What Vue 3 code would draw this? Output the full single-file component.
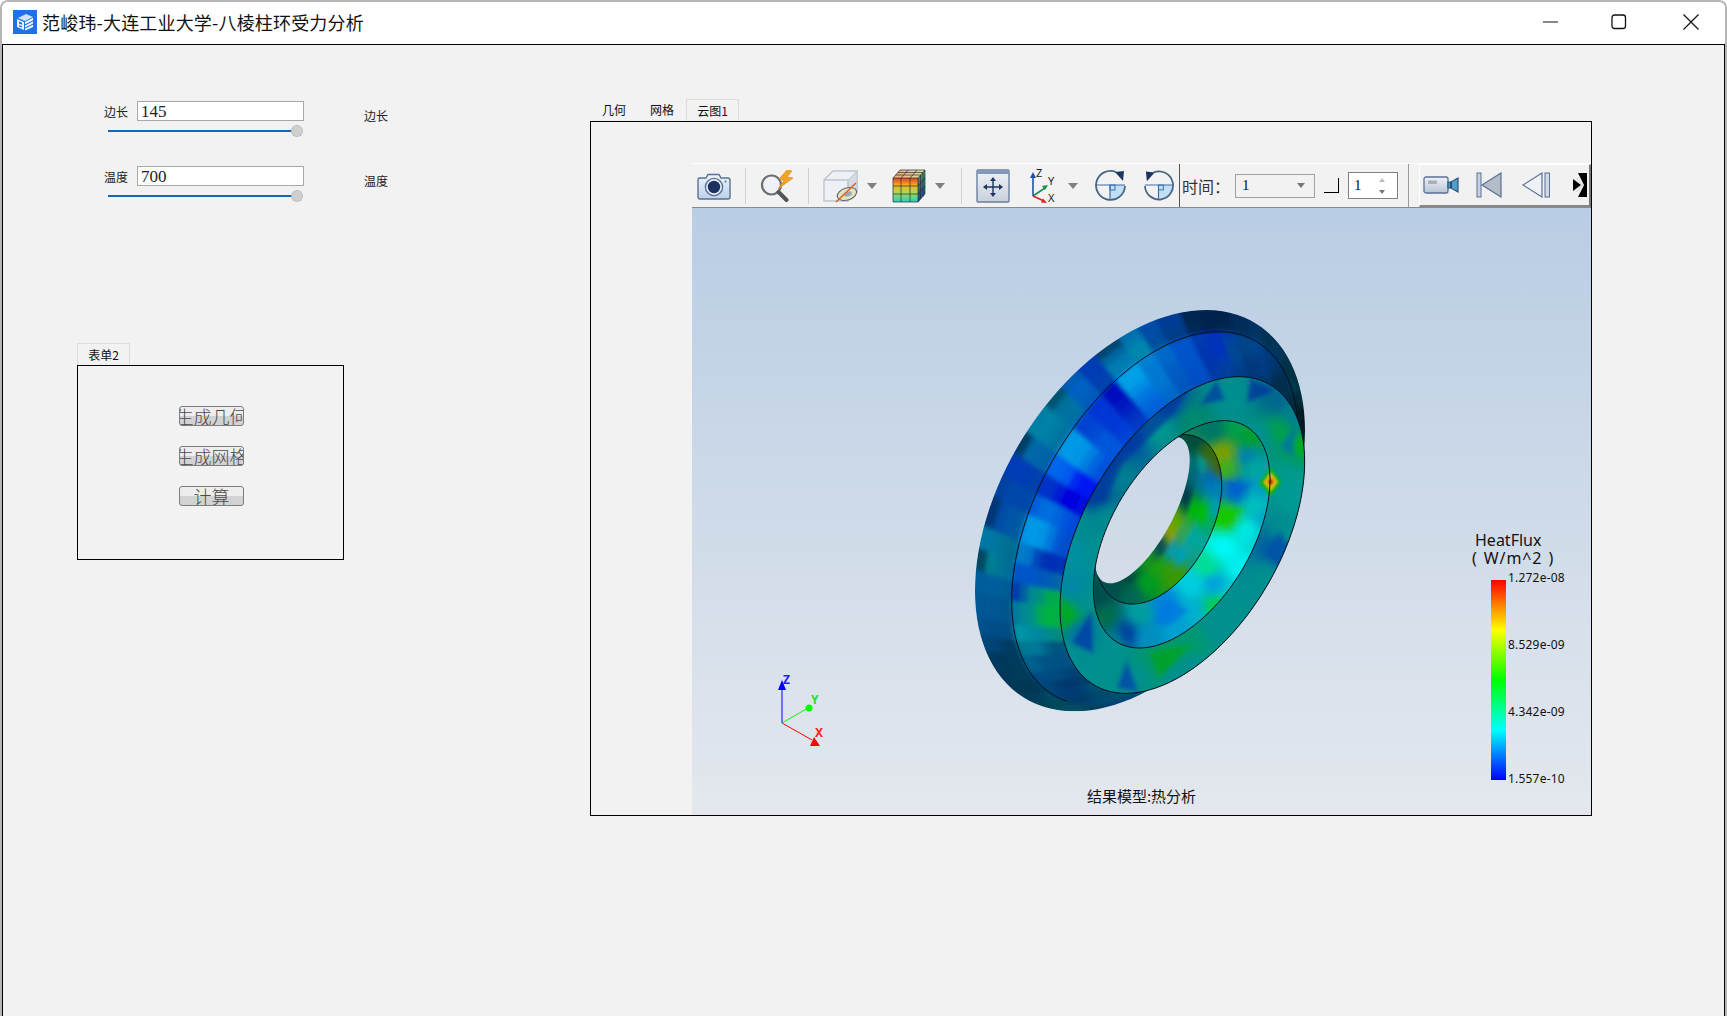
<template>
  <div class="window">
    <!-- 标题栏 -->
    <div class="titlebar">
      <svg class="app-icon" width="24" height="24" viewBox="0 0 24 24">
        <rect width="24" height="24" fill="#1a73e8" />
        <path d="M5 8l8-4 7 3-8 4z" fill="#cfe2fb" />
        <path d="M4 9l7 3v8l-7-3z" fill="#e8f1fd" />
        <path d="M12 12l8-4v2.2l-8 4zM12 15.4l8-4v2.2l-8 4zM12 18.8l8-4V17l-8 3.6z" fill="#fff" />
        <path d="M6 11.5l3 1.2v2l-3-1.2zM6 15l3 1.2v1.4l-3-1.2z" fill="#1a73e8" />
      </svg>
      <span class="title">范峻玮-大连工业大学-八棱柱环受力分析</span>
      <div class="win-btns">
        <svg width="16" height="16" viewBox="0 0 16 16"><path d="M0 8h15" stroke="#111" stroke-width="1.2" /></svg>
        <svg class="win-max" width="16" height="16" viewBox="0 0 16 16"><rect x="1" y="1" width="13.5" height="13.5" rx="2.5" fill="none" stroke="#111" stroke-width="1.3" /></svg>
        <svg class="win-close" width="16" height="16" viewBox="0 0 16 16"><path d="M.5.5l15 15M15.5.5l-15 15" stroke="#111" stroke-width="1.2" /></svg>
      </div>
    </div>

    <div class="client">
      <!-- 左侧参数 -->
      <div class="left">
        <div class="field" v-for="f in fields" :key="f.label">
          <div class="field-main">
            <div class="field-row">
              <span class="field-label">{{ f.label }}</span>
              <input class="field-input" type="text" :value="f.value" />
            </div>
            <div class="slider"><i class="slider-thumb"></i></div>
          </div>
          <span class="field-echo">{{ f.label }}</span>
        </div>

        <div class="form-tabs">
          <div class="tab active">表单2</div>
        </div>
        <div class="form-panel">
          <button class="btn" v-for="b in buttons" :key="b">{{ b }}</button>
        </div>
      </div>

      <!-- 右侧视图 -->
      <div class="right">
        <div class="view-tabs">
          <div class="tab plain">几何</div>
          <div class="tab plain">网格</div>
          <div class="tab active">云图1</div>
        </div>
        <div class="view-panel">
          <div class="toolbar">
            <svg class="i-camera" width="34" height="30" viewBox="0 0 34 30">
              <defs>
                <linearGradient id="camBody" x1="0" y1="0" x2="0" y2="1"><stop offset="0" stop-color="#eef4fb" /><stop offset="1" stop-color="#bcd2ea" /></linearGradient>
              </defs>
              <path d="M2 7h7l2-3.5h11L24 7h7a2 2 0 012 2v17a2 2 0 01-2 2H3a2 2 0 01-2-2V9a2 2 0 012-2z" fill="url(#camBody)" stroke="#5a7096" stroke-width="1.4" />
              <circle cx="17" cy="16" r="8.6" fill="#e8eef6" stroke="#5a7096" stroke-width="1.4" />
              <circle cx="17" cy="16" r="6.2" fill="#1c3160" />
              <circle cx="28.5" cy="10.5" r="1" fill="#5a7096" />
            </svg>
            <i class="sep s-1"></i>
            <svg class="i-mag" width="36" height="32" viewBox="0 0 36 32">
              <circle cx="11.500" cy="15" r="9.500" fill="#eef2f6" stroke="#6b6f73" stroke-width="2.200" />
              <path d="M18.500 22l8 8" stroke="#555" stroke-width="4" stroke-linecap="round" />
              <path d="M27 0l-8 9 5 1.500-6 8.500 15-11-6-1 5-6z" fill="#f0a326" stroke="#d98412" stroke-width=".6" />
            </svg>
            <i class="sep s-2"></i>
            <svg class="i-cube" width="38" height="34" viewBox="0 0 38 34">
              <path d="M1 11L10 2h24v21l-9 9H1z" fill="#eef0f4" stroke="#bcc5d2" stroke-width="1.4" />
              <path d="M25 11L34 2v21l-9 9z" fill="#d5dae2" stroke="#bcc5d2" />
              <path d="M1 11h24v21" fill="none" stroke="#bcc5d2" stroke-width="1.4" />
              <ellipse cx="24" cy="25" rx="10" ry="6" fill="#e8e2b8" stroke="#5b6a80" stroke-width="1.2" transform="rotate(-18 24 25)" />
              <ellipse cx="25" cy="25" rx="4" ry="2.4" fill="#9aa7ba" transform="rotate(-18 25 25)" />
              <path d="M13 33L33 14" stroke="#d9612a" stroke-width="1.5" />
            </svg>
            <svg class="arrow a-1" width="10" height="6" viewBox="0 0 10 6"><path d="M0 0h10L5 6z" /></svg>
            <svg class="i-rubik" width="34" height="34" viewBox="0 0 34 34">
              <defs>
                <linearGradient id="rubFront" x1="0" y1="0" x2="0" y2="1">
                  <stop offset="0" stop-color="#e0402a" /><stop offset=".3" stop-color="#f4b020" /><stop offset=".6" stop-color="#a8dc50" /><stop offset="1" stop-color="#28ccc0" />
                </linearGradient>
                <linearGradient id="rubTop" x1="0" y1="0" x2="1" y2="0"><stop offset="0" stop-color="#f4a878" /><stop offset="1" stop-color="#dce89c" /></linearGradient>
                <linearGradient id="rubSide" x1="0" y1="0" x2="0" y2="1"><stop offset="0" stop-color="#40a860" /><stop offset="1" stop-color="#1840b0" /></linearGradient>
              </defs>
              <path d="M1 9l7-8h25l-7 8z" fill="url(#rubTop)" />
              <rect x="1" y="9" width="25" height="24" fill="url(#rubFront)" />
              <path d="M26 9l7-8v24l-7 8z" fill="url(#rubSide)" />
              <path d="M1 9l7-8h25v24l-7 8H1zM1 9h25l7-8M26 9v24M9 9v24M18 9v24M1 17h25M1 25h25M9 9l7-8M18 9l7-8M3.500 6h25M6 3.500h25M28.500 6v24M31 3.500v24M26 17l7-8M26 25l7-8" stroke="#2b2b2b" stroke-width=".7" fill="none" />
            </svg>
            <svg class="arrow a-2" width="10" height="6" viewBox="0 0 10 6"><path d="M0 0h10L5 6z" /></svg>
            <i class="sep s-3"></i>
            <svg class="i-fit" width="34" height="34" viewBox="0 0 34 34">
              <defs>
                <linearGradient id="fitBg" x1="0" y1="0" x2="0" y2="1"><stop offset="0" stop-color="#f0f2f5" /><stop offset="1" stop-color="#c9d0dc" /></linearGradient>
              </defs>
              <rect x="1" y="1" width="32" height="32" rx="1" fill="url(#fitBg)" stroke="#6b7f9f" stroke-width="1.4" />
              <rect x="1" y="1" width="32" height="4" fill="#8498b8" />
              <path d="M17 10v16M9 18h16" stroke="#1d3560" stroke-width="1.4" />
              <path d="M17 8l-3 4h6zM17 28l-3-4h6zM7 18l4-3v6zM27 18l-4-3v6z" fill="#1d3560" />
            </svg>
            <svg class="i-axes" width="30" height="34" viewBox="0 0 30 34">
              <path d="M5 27V8" stroke="#2050b0" stroke-width="1.6" />
              <path d="M5 3l-3 6h6z" fill="#2050b0" />
              <path d="M5 27l12-8" stroke="#189048" stroke-width="1.6" />
              <path d="M20 16l-6 1 3 4z" fill="#189048" />
              <path d="M5 27l11 5" stroke="#e02020" stroke-width="1.6" />
              <path d="M19 34l-6-.500 2-4z" fill="#e02020" />
              <text x="8" y="8" class="axis-txt">Z</text>
              <text x="20" y="16" class="axis-txt">Y</text>
              <text x="20" y="33" class="axis-txt">X</text>
            </svg>
            <svg class="arrow a-3" width="10" height="6" viewBox="0 0 10 6"><path d="M0 0h10L5 6z" /></svg>
            <svg class="i-rot" width="33" height="33" viewBox="0 0 33 33">
              <path d="M16 16h15a15 15 0 01-15 15z" fill="#bfe0f6" />
              <rect x="16" y="16" width="5" height="5" fill="none" stroke="#3f6ea8" />
              <path d="M16 16v15M1.500 16h29.500" stroke="#3f6ea8" stroke-width="1.200" fill="none" />
              <path d="M31 17A14.500 14.500 0 1122 3" fill="none" stroke="#4a6486" stroke-width="1.800" />
              <path d="M21 3l9-1-1 10z" fill="#1d3560" />
            </svg>
            <svg class="i-rot i-rot2" width="32" height="33" viewBox="0 0 33 33">
              <path d="M16 16h15a15 15 0 01-15 15z" fill="#bfe0f6" />
              <rect x="16" y="16" width="5" height="5" fill="none" stroke="#3f6ea8" />
              <path d="M16 16v15M2 16h29" stroke="#3f6ea8" stroke-width="1.200" fill="none" />
              <path d="M2 17A14.500 14.500 0 1011 3" fill="none" stroke="#4a6486" stroke-width="1.800" />
              <path d="M12 3L3 2l1 10z" fill="#1d3560" />
            </svg>
            <i class="sep dark"></i>
            <span class="time-label">时间：</span>
            <div class="time-select"><span>1</span><svg width="8" height="5" viewBox="0 0 8 5"><path d="M0 0h8L4 5z" fill="#777" /></svg></div>
            <i class="mini-btn"></i>
            <div class="time-spin">
              <span>1</span>
              <svg width="8" height="16" viewBox="0 0 8 16"><path d="M4 0l3 4H1z" fill="#bbb" /><path d="M4 16l3-4H1z" fill="#777" /></svg>
            </div>
            <i class="sep s-4"></i>
            <div class="player">
              <svg class="i-video" width="36" height="20" viewBox="0 0 36 20">
                <defs>
                  <linearGradient id="vidBody" x1="0" y1="0" x2="0" y2="1"><stop offset="0" stop-color="#f0f3f7" /><stop offset="1" stop-color="#b8c4d4" /></linearGradient>
                </defs>
                <rect x="1" y="2" width="24" height="16" rx="2" fill="url(#vidBody)" stroke="#5a7096" stroke-width="1.300" />
                <rect x="5" y="5.500" width="9" height="3.500" fill="#a8b0bc" />
                <path d="M25 7h3l7-4v14l-7-4h-3z" fill="#4f9fd0" stroke="#34507a" stroke-width="1.200" />
                <path d="M28 7v6" stroke="#1d3560" stroke-width="1.500" />
              </svg>
              <svg class="i-first" width="26" height="26" viewBox="0 0 26 26">
                <rect x="1" y="1" width="4" height="24" fill="#c8d2e0" stroke="#5a7096" />
                <path d="M6 13L25 1v24z" fill="#b4bcc8" stroke="#5a7096" stroke-width="1.200" />
              </svg>
              <svg class="i-prev" width="29" height="26" viewBox="0 0 29 26">
                <path d="M1 13L20 1v24z" fill="#eef1f5" stroke="#5a7096" stroke-width="1.200" />
                <rect x="23" y="1" width="4.500" height="24" fill="#d0d8e4" stroke="#5a7096" />
              </svg>
              <svg class="i-next" width="14" height="24" viewBox="0 0 14 24">
                <defs><filter id="softNext" x="-20%" y="-20%" width="140%" height="140%"><feGaussianBlur stdDeviation=".6" /></filter></defs>
                <g filter="url(#softNext)">
                  <path d="M0 6l8 6-8 6z" fill="#000" />
                  <path d="M5 0h9v24H5l6-12z" fill="#000" />
                  <path d="M3.500 5l6 7-6 7" fill="none" stroke="#ddd" stroke-width="1.500" />
                </g>
              </svg>
            </div>
          </div>

          <div class="viewport">
            <!-- 八棱柱环云图 -->
            <svg class="ring" width="380" height="440" viewBox="0 0 1140 1320">
              <defs>
                <clipPath id="hullClip"><path :d="outline(S)" /><path :d="outline(A)" /><path :d="outline(B)" /></clipPath>
                <clipPath id="faceClip"><path :d="outline(B)" /></clipPath>
                <clipPath id="boreClip"><path :d="outline(C)" /></clipPath>
                <clipPath id="wallClip"><path :d="outline(D)" /></clipPath>
                <filter id="soften" filterUnits="userSpaceOnUse" x="0" y="0" width="1140" height="1320">
                  <feGaussianBlur in="SourceGraphic" stdDeviation="6" result="soft" />
                  <feMerge><feMergeNode in="SourceGraphic" /><feMergeNode in="soft" /></feMerge>
                </filter>
                <filter id="softSpot" filterUnits="userSpaceOnUse" x="840" y="480" width="190" height="190">
                  <feGaussianBlur stdDeviation="3" />
                </filter>
                <linearGradient id="holeBg" gradientUnits="userSpaceOnUse" x1="0" y1="420" x2="0" y2="900">
                  <stop offset="0" stop-color="#cad7e7" /><stop offset="1" stop-color="#d4dde9" />
                </linearGradient>
              </defs>
              <g clip-path="url(#hullClip)">
                <g filter="url(#soften)"><path v-for="(cell, i) in cells.rim" :key="'r' + i" :d="cell.d" :fill="cell.c" :stroke="cell.c" stroke-width="1.500" /></g>
              </g>
              <path :d="arc(A, 232, 5)" class="edge" />
              <g clip-path="url(#faceClip)">
                <g filter="url(#soften)">
                  <path v-for="(cell, i) in cells.face" :key="'f' + i" :d="cell.d" :fill="cell.c" :stroke="cell.c" stroke-width="1.500" />
                  <polygon v-for="(f, i) in faceFacets" :key="'ff' + i" :points="f[0]" :fill="f[1]" fill-opacity="0.72" />
                </g>
              </g>
              <path :d="outline(B)" class="edge" />
              <g clip-path="url(#boreClip)">
                <g filter="url(#soften)">
                  <path v-for="(cell, i) in cells.bore" :key="'b' + i" :d="cell.d" :fill="cell.c" :stroke="cell.c" stroke-width="1.500" />
                  <polygon v-for="(f, i) in boreFacets" :key="'bf' + i" :points="f[0]" :fill="f[1]" fill-opacity="0.72" />
                </g>
                <g clip-path="url(#wallClip)">
                  <g filter="url(#soften)"><path v-for="(cell, i) in cells.wall" :key="'w' + i" :d="cell.d" :fill="cell.c" :stroke="cell.c" stroke-width="1.500" /></g>
                </g>
                <path :d="outline(D)" class="edge" />
                <path :d="outline(E)" fill="url(#holeBg)" />
              </g>
              <!-- 最高温点 -->
              <g filter="url(#softSpot)">
                <polygon points="932,530 965,575 932,620 895,578" fill="#10b020" />
                <polygon points="932,548 952,575 932,602 912,577" fill="#e8c000" />
                <polygon points="932,562 942,575 932,588 922,576" fill="#d01818" />
              </g>
              <path :d="outline(C)" class="edge" />
            </svg>

            <svg class="triad" width="120" height="100" viewBox="0 0 120 100">
              <path d="M42 63V26" stroke="#0000ff" />
              <path d="M42 20l-4 10h8z" fill="#0000ff" />
              <path d="M42 63l26-15" stroke="#00ff00" />
              <circle cx="69" cy="48" r="3.500" fill="#00ff00" />
              <path d="M42 63l30 17" stroke="#ff0000" />
              <path d="M74 77l6 9H70z" fill="#ff0000" />
              <text x="43" y="24" fill="#2222ff" class="triad-txt">Z</text>
              <text x="71" y="44" fill="#22e022" class="triad-txt">Y</text>
              <text x="75" y="77" fill="#ff2222" class="triad-txt">X</text>
            </svg>

            <div class="legend">
              <div class="legend-title">HeatFlux</div>
              <div class="legend-unit">( W/m^2 )</div>
              <div class="legend-body">
                <div class="legend-bar"></div>
                <div class="legend-ticks">
                  <span v-for="t in ticks" :key="t">{{ t }}</span>
                </div>
              </div>
            </div>

            <div class="model-name">结果模型:热分析</div>
          </div>
        </div>
      </div>
    </div>
  </div>
</template>

<script setup>
const fields = [
  { label: '边长', value: '145' },
  { label: '温度', value: '700' }
]
const buttons = ['生成几何', '生成网格', '计算']
const ticks = ['1.272e-08', '8.529e-09', '4.342e-09', '1.557e-10']

// 各圈椭圆，坐标是参考图放大3倍后量的
const S = { cx: 540, cy: 662, rx: 495, ry: 602, phi: 0.41 }
const A = { cx: 585, cy: 685, rx: 430, ry: 560, phi: 0.46 }
const B = { cx: 667, cy: 735, rx: 367, ry: 475, phi: 0.48 }
const C = { cx: 665, cy: 733, rx: 265, ry: 341, phi: 0.5 }
const D = { cx: 595, cy: 688, rx: 190, ry: 254, phi: 0.42 }
const E = { cx: 547, cy: 660, rx: 142, ry: 220, phi: 0.75 }

const at = (e, t) => [e.cx + e.rx * Math.cos(t), e.cy - e.ry * Math.sin(t + e.phi)]
const outline = (e) => {
  let d = ''
  for (let i = 0; i < 120; i++) {
    const p = at(e, (i / 120) * Math.PI * 2)
    d += (i ? 'L' : 'M') + p[0].toFixed(1) + ' ' + p[1].toFixed(1)
  }
  return d + 'Z'
}
// 只画一段椭圆，角度用度
const arc = (e, from, to) => {
  let d = ''
  for (let i = 0; i <= 80; i++) {
    const p = at(e, ((from + ((to - from) * i) / 80) * Math.PI) / 180)
    d += (i ? 'L' : 'M') + p[0].toFixed(1) + ' ' + p[1].toFixed(1)
  }
  return d
}

const rgb = (h) => [parseInt(h.slice(1, 3), 16), parseInt(h.slice(3, 5), 16), parseInt(h.slice(5, 7), 16)]

// 控制点取色，中间用反距离插值
const colorAt = (pts, x, y, shade = 1) => {
  let r = 0, g = 0, b = 0, sum = 0
  for (const p of pts) {
    const d2 = (p[0] - x) ** 2 + (p[1] - y) ** 2
    const w = 1 / (d2 + 400) ** 1.9
    const c = rgb(p[2])
    r += c[0] * w; g += c[1] * w; b += c[2] * w; sum += w
  }
  const fix = (v) => Math.min(255, Math.round((v / sum) * shade))
  return `rgb(${fix(r)},${fix(g)},${fix(b)})`
}

const lerp = (p, q, s) => [p[0] + (q[0] - p[0]) * s, p[1] + (q[1] - p[1]) * s]

// facets>0 时颜色按粗分段取样，外圈就有径向的条纹
const band = (from, to, steps, pts, facets = 0) => {
  const out = []
  const n = 170
  for (let i = 0; i < n; i++) {
    const t0 = (i / n) * Math.PI * 2
    const t1 = ((i + 1) / n) * Math.PI * 2
    for (let j = 0; j < steps; j++) {
      const s0 = j / steps
      const s1 = (j + 1) / steps
      const a = lerp(at(from, t0), at(to, t0), s0)
      const b = lerp(at(from, t1), at(to, t1), s0)
      const c = lerp(at(from, t1), at(to, t1), s1)
      const d = lerp(at(from, t0), at(to, t0), s1)
      let m = [(a[0] + b[0] + c[0] + d[0]) / 4, (a[1] + b[1] + c[1] + d[1]) / 4]
      let shade = 1
      if (facets) {
        const k = Math.floor((i / n) * facets)
        const tc = ((k + 0.5) / facets) * Math.PI * 2
        m = lerp(at(from, tc), at(to, tc), (s0 + s1) / 2)
        shade = 1 + 0.05 * Math.sin(k * 2.4)
      }
      out.push({
        d: `M${a[0].toFixed(1)} ${a[1].toFixed(1)}L${b[0].toFixed(1)} ${b[1].toFixed(1)}L${c[0].toFixed(1)} ${c[1].toFixed(1)}L${d[0].toFixed(1)} ${d[1].toFixed(1)}Z`,
        c: colorAt(pts, m[0], m[1], shade)
      })
    }
  }
  return out
}

const rearPts = [
  [700, 75, '#002a55'], [780, 85, '#00214a'], [620, 85, '#003a90'], [560, 110, '#0050b0'], [500, 140, '#0070b0'],
  [430, 155, '#00304a'], [300, 280, '#002a3a'], [180, 450, '#002540'], [90, 640, '#00203a'], [55, 800, '#002a40'],
  [520, 180, '#0090b0'], [420, 220, '#0040c0'], [350, 290, '#0060c0'], [280, 370, '#0090b0'], [230, 440, '#0070b0'],
  [170, 540, '#0040c0'], [120, 640, '#0050c0'], [90, 720, '#0080b0'], [85, 790, '#0090a0'], [80, 870, '#0060a0'],
  [70, 950, '#005a98'], [90, 1030, '#004a80'], [130, 1120, '#00385a'], [190, 1190, '#003a58'], [850, 110, '#003060'],
  [930, 170, '#003550'], [990, 260, '#003040'], [1030, 380, '#001a20'], [980, 300, '#004a60'], [910, 200, '#00408a'],
  [330, 1240, '#005060'], [420, 1250, '#004060'], [500, 1240, '#003a90'], [600, 1190, '#003060']
]
const midPts = [
  [770, 170, '#0030b8'], [680, 190, '#0050c0'], [600, 210, '#0070d0'], [540, 240, '#00a0e0'], [470, 310, '#0010c8'],
  [400, 380, '#0040d0'], [340, 470, '#00a0f0'], [300, 540, '#0060e0'], [340, 600, '#0000e8'], [260, 600, '#0030d0'],
  [240, 690, '#0080e0'], [220, 740, '#00a0e0'], [270, 800, '#0030c0'], [190, 850, '#0050c0'], [170, 920, '#0030b0'],
  [200, 935, '#00a090'], [270, 960, '#00b840'], [170, 1000, '#0090a0'], [230, 1060, '#0080a0'], [270, 1100, '#005080'],
  [240, 1170, '#004a80'], [330, 1190, '#003a70'], [850, 180, '#004a90'], [900, 230, '#003a80'], [960, 300, '#003050'],
  [1010, 400, '#002a30'], [420, 1170, '#005070']
]
const facePts = [
  [620, 340, '#0050a0'], [500, 430, '#0040a8'], [430, 530, '#0030a0'], [400, 620, '#004a98'], [360, 700, '#008c90'],
  [345, 800, '#0090a0'], [340, 900, '#0088a8'], [315, 970, '#00b010'], [370, 930, '#009090'], [360, 1030, '#0078a0'],
  [340, 1090, '#008f90'], [430, 1120, '#009090'], [480, 1050, '#009090'], [580, 1130, '#009a60'],
  [620, 1090, '#009a60'], [640, 1155, '#009090'], [700, 1070, '#009a70'], [780, 1020, '#00908e'], [850, 950, '#009090'],
  [920, 860, '#009090'], [940, 780, '#0060a0'], [980, 720, '#008f90'], [1010, 620, '#009a96'], [1022, 480, '#009a60'],
  [960, 420, '#00a050'], [900, 440, '#009090'], [810, 320, '#008f90'], [950, 330, '#006890'], [1000, 380, '#008090'],
  [700, 400, '#008a70'], [590, 410, '#009a90'], [480, 560, '#008090'], [440, 690, '#008a90'], [420, 780, '#009090'],
  [985, 570, '#009a90'], [550, 1150, '#009090'], [700, 1120, '#009090'], [830, 1010, '#009090']
]
const faceFacets = [
  ['570,1090 700,1060 600,1165', '#00a418'],
  ['335,1060 395,960 400,1090', '#0036a8'],
  ['470,1195 500,1110 535,1205', '#0040b0'],
  ['1036,420 1036,510 985,470', '#00b010'],
  ['1005,410 960,470 1000,500', '#0070a8'],
  ['720,345 770,270 795,330', '#003aa0'],
  ['860,340 870,265 945,300', '#0030a0'],
  ['915,790 960,720 985,770 950,830', '#0050a8'],
  ['385,640 440,510 610,345 690,295 640,375 490,520 435,640', '#0038a0'],
  ['170,950 320,930 320,1000 190,990', '#00a040']
]
const borePts = [
  [760, 420, '#007868'], [830, 410, '#00a050'], [870, 440, '#00a030'], [860, 500, '#0080b0'], [790, 490, '#80a000'],
  [800, 530, '#40b020'], [880, 530, '#00a8a0'], [830, 600, '#0060d0'], [880, 640, '#00c0c0'], [800, 680, '#20c800'],
  [790, 770, '#00f8f8'], [860, 720, '#00e8e8'], [840, 830, '#00f0f0'], [740, 830, '#00e090'], [700, 880, '#00d0e0'],
  [760, 880, '#00a0e0'], [770, 950, '#00d040'], [700, 960, '#00b0d0'], [620, 950, '#0080e0'], [540, 970, '#00a0a0'],
  [500, 1030, '#0040a0'], [560, 1040, '#0090c0'], [650, 1020, '#00a0d0'], [440, 980, '#007050'], [470, 1050, '#008090'],
  [420, 920, '#005050'], [915, 690, '#00a8c8'], [900, 760, '#00d0d0'], [880, 860, '#00e8e8'], [810, 920, '#00c8d0'],
  [895, 590, '#00a0c0']
]
const boreFacets = [
  ['770,560 830,605 890,575 835,585', '#0060d0'],
  ['880,860 825,950 750,975 790,920', '#00d040'],
  ['580,1000 620,930 690,960 620,1010', '#0078e0'],
  ['780,660 860,650 800,710 730,690', '#10c800']
]
const wallPts = [
  [680, 520, '#003a50'], [660, 620, '#003050'], [590, 760, '#004050'], [500, 860, '#004a40'], [720, 660, '#00c000'],
  [640, 700, '#60a800'], [620, 720, '#a0a000'], [700, 740, '#00a8a0'], [650, 790, '#00a0c0'], [600, 830, '#20a010'],
  [560, 880, '#00a020'], [640, 850, '#409800'], [520, 910, '#006858'], [450, 900, '#005050'], [750, 560, '#006cc0'],
  [720, 520, '#00a0a0'], [745, 490, '#406800'], [770, 530, '#506000'], [700, 460, '#005040'], [770, 650, '#00a0b0'],
  [770, 600, '#0080c0']
]

const cells = {
  rim: [...band(S, A, 4, rearPts, 52), ...band(A, B, 6, midPts, 52)],
  face: band(B, C, 8, facePts),
  bore: band(C, D, 7, borePts),
  wall: band(D, E, 4, wallPts)
}
</script>

<style scoped>
.window {
  width: 1727px;
  height: 1016px;
  box-sizing: border-box;
  display: flex;
  flex-direction: column;
  background: #f2f2f2;
  border: 2px solid #b6b6b6;
  border-bottom: 0;
  border-radius: 8px 8px 0 0;
  overflow: hidden;
  font-family: "Noto Sans CJK SC", "Noto Sans", sans-serif;
  color: #111;
}
.titlebar {
  height: 43px;
  flex: none;
  box-sizing: border-box;
  display: flex;
  align-items: center;
  padding: 0 0 3px 11px;
  background: #fff;
  border-bottom: 1px solid #000;
}
.title {
  margin-left: 5px;
  font-size: 18px;
  line-height: 24px;
  letter-spacing: 0.18px;
}
.win-btns {
  margin-left: auto;
  display: flex;
  gap: 52px;
  padding-right: 26px;
}
.win-btns svg {
  display: block;
}
.win-close {
  margin-left: 4px;
}
.client {
  flex: 1;
  display: flex;
  border-left: 1px solid #000;
  border-right: 1px solid #000;
  background: #f2f2f2;
}
.left {
  width: 587px;
  flex: none;
  box-sizing: border-box;
  padding-top: 56px;
}
.field {
  height: 65px;
  padding-left: 101px;
  display: flex;
}
.field-main {
  width: 200px;
}
.field-row {
  display: flex;
  align-items: center;
  gap: 8px;
}
.field-label {
  width: 25px;
  font-size: 12px;
  color: #222;
  white-space: nowrap;
}
.field-input {
  width: 167px;
  height: 20px;
  box-sizing: border-box;
  padding: 1px 3px 0;
  border: 1px solid #a8a8a8;
  background: #fff;
  font-family: "Liberation Serif", serif;
  font-size: 17px;
  color: #222;
  outline: none;
}
.slider {
  position: relative;
  margin: 9px 0 0 4px;
  width: 188px;
  height: 2px;
  background: #1565b5;
}
.slider-thumb {
  position: absolute;
  right: -7px;
  top: -5px;
  width: 10px;
  height: 10px;
  border-radius: 50%;
  background: #cfcfcf;
  border: 1px dotted #aaa;
}
.field-echo {
  margin: 6px 0 0 60px;
  font-size: 12px;
  color: #222;
  white-space: nowrap;
}
.form-tabs {
  margin: 112px 0 0 74px;
  display: flex;
  height: 22px;
}
.tab {
  width: 53px;
  box-sizing: border-box;
  font-size: 12px;
  line-height: 22px;
  text-align: center;
}
.tab.active {
  border: 1px solid #dcdcdc;
  border-bottom: 0;
  background: #f2f2f2;
}
.tab.plain {
  width: 48px;
}
.form-panel {
  margin-left: 74px;
  width: 267px;
  height: 195px;
  box-sizing: border-box;
  border: 1px solid #000;
  display: flex;
  flex-direction: column;
  align-items: center;
  gap: 20px;
  padding: 40px 0 0 2px;
}
.btn {
  width: 65px;
  height: 20px;
  flex: none;
  padding: 0;
  border: 1px solid #7d7d7d;
  border-radius: 3px;
  background: linear-gradient(#ededed 0 50%, #d2d2d2 50% 100%);
  font-family: "Noto Sans CJK SC", sans-serif;
  font-size: 18px;
  line-height: 18px;
  color: #4a4a4a;
  overflow: hidden;
  white-space: nowrap;
  display: flex;
  justify-content: center;
  align-items: center;
  font-weight: 300;
}
.right {
  padding-top: 54px;
}
.view-tabs {
  height: 22px;
  display: flex;
}
.view-panel {
  width: 1002px;
  height: 695px;
  box-sizing: border-box;
  border: 1px solid #000;
  padding: 41px 0 0 101px;
  display: flex;
  flex-direction: column;
}
.toolbar {
  height: 45px;
  flex: none;
  box-sizing: border-box;
  display: flex;
  align-items: center;
  overflow: hidden;
  border-top: 1px solid #fff;
  border-bottom: 1px solid #8a8a8a;
}
.toolbar svg {
  flex: none;
  display: block;
}
.i-camera { margin-left: 5px; }
.sep {
  flex: none;
  width: 1px;
  height: 36px;
  background: #cfcfcf;
}
.s-1 { margin-left: 14px; }
.i-mag { margin-left: 14px; }
.s-2 { margin-left: 12px; }
.i-cube { margin-left: 14px; }
.arrow {
  fill: #808080;
}
.a-1 { margin-left: 6px; }
.i-rubik { margin-left: 15px; }
.a-2 { margin-left: 9px; }
.s-3 { margin-left: 16px; }
.i-fit { margin-left: 14px; }
.i-axes { margin-left: 18px; }
.axis-txt {
  font-family: "Noto Sans", sans-serif;
  font-size: 11px;
  fill: #222;
}
.a-3 { margin-left: 10px; }
.i-rot { margin-left: 16px; }
.sep.dark {
  margin-left: 4px;
  height: 44px;
  background: #555;
}
.time-label {
  margin-left: 2px;
  width: 44px;
  font-size: 16px;
  white-space: nowrap;
  color: #333;
}
.time-select {
  margin-left: 9px;
  width: 80px;
  height: 24px;
  box-sizing: border-box;
  border: 1px solid #a0a0a0;
  display: flex;
  align-items: center;
  justify-content: space-between;
  padding: 0 9px 0 6px;
  font-family: "Liberation Serif", serif;
  font-size: 15px;
}
.mini-btn {
  flex: none;
  margin-left: 9px;
  width: 15px;
  height: 15px;
  box-sizing: border-box;
  border-right: 1px solid #000;
  border-bottom: 1px solid #000;
}
.time-spin {
  margin-left: 9px;
  width: 50px;
  height: 27px;
  box-sizing: border-box;
  border: 1px solid #808080;
  background: #fff;
  display: flex;
  align-items: center;
  justify-content: space-between;
  padding: 0 11px 0 5px;
  font-family: "Liberation Serif", serif;
  font-size: 15px;
}
.s-4 {
  margin-left: 10px;
  height: 44px;
  background: #9a9a9a;
}
.player {
  margin-left: 10px;
  flex: 1;
  height: 43px;
  box-sizing: border-box;
  display: flex;
  align-items: center;
  background: #f1f1f1;
  border-top: 1px solid #fff;
  border-left: 1px solid #fff;
  border-right: 2px solid #777;
  border-bottom: 2px solid #888;
}
.i-video { margin-left: 3px; }
.i-first { margin-left: 17px; }
.i-prev { margin-left: 20px; }
.i-next { margin-left: 22px; }
.viewport {
  flex: 1;
  position: relative;
  overflow: hidden;
  background: linear-gradient(#b9cde4, #e4e8ee);
}
.ring {
  position: absolute;
  left: 268px;
  top: 82px;
}
.edge {
  fill: none;
  stroke: #05101a;
  stroke-width: 3;
}
.triad {
  position: absolute;
  left: 48px;
  top: 452px;
}
.triad path[stroke] {
  fill: none;
  stroke-width: 1;
}
.triad-txt {
  font-family: "Noto Sans", sans-serif;
  font-size: 12px;
  font-weight: 700;
}
.legend {
  position: absolute;
  left: 780px;
  top: 323px;
  width: 116px;
  color: #111;
  font-family: "Noto Sans", sans-serif;
}
.legend-title {
  padding-left: 3px;
  font-size: 16px;
  line-height: 18px;
}
.legend-unit {
  font-size: 16px;
  line-height: 18px;
  white-space: nowrap;
  letter-spacing: 0.9px;
  word-spacing: 1px;
}
.legend-body {
  margin: 13px 0 0 19px;
  display: flex;
  height: 200px;
}
.legend-bar {
  width: 15px;
  background: linear-gradient(#ff0000, #ffff00 25%, #00ff00 50%, #00ffff 75%, #0000ff);
}
.legend-ticks {
  margin: -10px 0 -10px 2px;
  display: flex;
  flex-direction: column;
  justify-content: space-between;
  font-size: 12px;
  line-height: 16px;
  height: 217px;
  letter-spacing: 0.2px;
}
.model-name {
  position: absolute;
  left: 0;
  right: 0;
  bottom: 9px;
  text-align: center;
  font-size: 15px;
  line-height: 20px;
  color: #111;
}
</style>

<style>
html, body {
  margin: 0;
  background: #fff;
}
</style>
